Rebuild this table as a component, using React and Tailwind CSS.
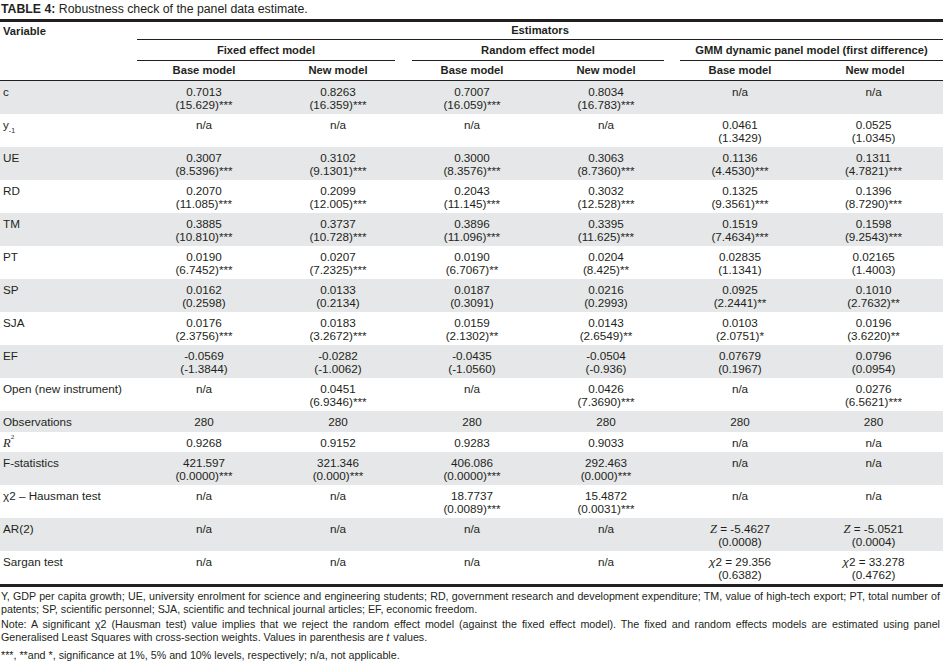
import React from "react";

const NA = ["n/a"];

const ROWS = [
  { v: "c", cells: [["0.7013", "(15.629)***"], ["0.8263", "(16.359)***"], ["0.7007", "(16.059)***"], ["0.8034", "(16.783)***"], NA, NA] },
  { v: "y", cells: [NA, NA, NA, NA, ["0.0461", "(1.3429)"], ["0.0525", "(1.0345)"]] },
  { v: "UE", cells: [["0.3007", "(8.5396)***"], ["0.3102", "(9.1301)***"], ["0.3000", "(8.3576)***"], ["0.3063", "(8.7360)***"], ["0.1136", "(4.4530)***"], ["0.1311", "(4.7821)***"]] },
  { v: "RD", cells: [["0.2070", "(11.085)***"], ["0.2099", "(12.005)***"], ["0.2043", "(11.145)***"], ["0.3032", "(12.528)***"], ["0.1325", "(9.3561)***"], ["0.1396", "(8.7290)***"]] },
  { v: "TM", cells: [["0.3885", "(10.810)***"], ["0.3737", "(10.728)***"], ["0.3896", "(11.096)***"], ["0.3395", "(11.625)***"], ["0.1519", "(7.4634)***"], ["0.1598", "(9.2543)***"]] },
  { v: "PT", cells: [["0.0190", "(6.7452)***"], ["0.0207", "(7.2325)***"], ["0.0190", "(6.7067)**"], ["0.0204", "(8.425)**"], ["0.02835", "(1.1341)"], ["0.02165", "(1.4003)"]] },
  { v: "SP", cells: [["0.0162", "(0.2598)"], ["0.0133", "(0.2134)"], ["0.0187", "(0.3091)"], ["0.0216", "(0.2993)"], ["0.0925", "(2.2441)**"], ["0.1010", "(2.7632)**"]] },
  { v: "SJA", cells: [["0.0176", "(2.3756)***"], ["0.0183", "(3.2672)***"], ["0.0159", "(2.1302)**"], ["0.0143", "(2.6549)**"], ["0.0103", "(2.0751)*"], ["0.0196", "(3.6220)**"]] },
  { v: "EF", cells: [["-0.0569", "(-1.3844)"], ["-0.0282", "(-1.0062)"], ["-0.0435", "(-1.0560)"], ["-0.0504", "(-0.936)"], ["0.07679", "(0.1967)"], ["0.0796", "(0.0954)"]] },
  { v: "Open (new instrument)", cells: [NA, ["0.0451", "(6.9346)***"], NA, ["0.0426", "(7.3690)***"], NA, ["0.0276", "(6.5621)***"]] },
  { v: "Observations", cells: [["280"], ["280"], ["280"], ["280"], ["280"], ["280"]] },
  { v: "R2", cells: [["0.9268"], ["0.9152"], ["0.9283"], ["0.9033"], NA, NA] },
  { v: "F-statistics", cells: [["421.597", "(0.0000)***"], ["321.346", "(0.000)***"], ["406.086", "(0.0000)***"], ["292.463", "(0.000)***"], NA, NA] },
  { v: "χ2 – Hausman test", cells: [NA, NA, ["18.7737", "(0.0089)***"], ["15.4872", "(0.0031)***"], NA, NA] },
  { v: "AR(2)", cells: [NA, NA, NA, NA, ["Z|-5.4627", "(0.0008)"], ["Z|-5.0521", "(0.0004)"]] },
  { v: "Sargan test", cells: [NA, NA, NA, NA, ["X|29.356", "(0.6382)"], ["X|33.278", "(0.4762)"]] },
];

function Label({ v }) {
  if (v === "y")
    return (
      <span>
        y<sub className="text-[7px] align-[-2px]">-1</sub>
      </span>
    );
  if (v === "R2")
    return (
      <span className="font-['Liberation_Serif',serif] italic text-[12.5px]">
        R<sup className="text-[7px] not-italic align-[4px]">2</sup>
      </span>
    );
  return v;
}

function Value({ text }) {
  if (text.startsWith("Z|"))
    return (
      <span>
        <span className="font-['Liberation_Serif',serif] italic text-[12.5px]">Z</span> = {text.slice(2)}
      </span>
    );
  if (text.startsWith("X|"))
    return (
      <span>
        <span className="italic">χ</span>2 = {text.slice(2)}
      </span>
    );
  return text;
}

export default function App() {
  return (
    <div className="w-[946px] h-[663px] bg-white text-[#231f20] font-['Liberation_Sans',Arial,sans-serif] overflow-hidden">
      <div className="h-[19px] flex items-center text-[12.3px] pl-[1px]">
        <span className="font-bold">TABLE 4:</span>&nbsp;Robustness check of the panel data estimate.
      </div>
      <div className="h-[3px] w-[943px] bg-[#231f20]" />

      <table className="table-fixed border-separate border-spacing-0 w-[943px] text-[11.7px]">
        <colgroup>
          <col className="w-[137px]" />
          <col className="w-[134px]" />
          <col className="w-[134px]" />
          <col className="w-[134px]" />
          <col className="w-[134px]" />
          <col className="w-[134px]" />
          <col className="w-[136px]" />
        </colgroup>
        <thead className="text-[11.2px]">
          <tr>
            <th rowSpan={3} className="p-0 pl-[3px] pt-[1px] text-left align-top font-bold border-b border-[#231f20]">
              Variable
            </th>
            <th colSpan={6} className="p-0 h-[18px] font-bold border-b border-[#231f20]">
              Estimators
            </th>
          </tr>
          <tr>
            <th colSpan={2} className="p-0 font-bold">
              <div className="h-[21px] flex items-center justify-center border-b border-[#231f20] mr-[10px]">
                Fixed effect model
              </div>
            </th>
            <th colSpan={2} className="p-0 font-bold">
              <div className="h-[21px] flex items-center justify-center border-b border-[#231f20] ml-[7px] mr-[9px]">
                Random effect model
              </div>
            </th>
            <th colSpan={2} className="p-0 font-bold">
              <div className="h-[21px] flex items-center justify-center border-b border-[#231f20] ml-[7px]">
                GMM dynamic panel model (first difference)
              </div>
            </th>
          </tr>
          <tr>
            {["Base model", "New model", "Base model", "New model", "Base model", "New model"].map((h, i) => (
              <th key={i} className="p-0 h-[20px] font-bold border-b border-[#231f20]">
                {h}
              </th>
            ))}
          </tr>
        </thead>
        <tbody>
          {ROWS.map((r, i) => (
            <tr key={i} className={i % 2 === 0 ? "bg-[#e6e7e8]" : "bg-white"}>
              <td className="pl-[3px] pt-[5px] pb-[3px] leading-[12.5px] align-top text-left">
                <Label v={r.v} />
              </td>
              {r.cells.map((c, j) => (
                <td key={j} className={"pt-[5px] pb-[3px] leading-[12.5px] align-top text-center" + (j === 5 ? " pr-[3px]" : "")}>
                  {c.map((t, k) => (
                    <div key={k}>
                      <Value text={t} />
                    </div>
                  ))}
                </td>
              ))}
            </tr>
          ))}
        </tbody>
      </table>
      <div className="h-[3px] w-[943px] bg-[#231f20]" />

      <div className="w-[940px] pl-[1px] pt-[3px] text-[10.7px] leading-[13px] text-justify">
        <p className="mb-[2px]">
          Y, GDP per capita growth; UE, university enrolment for science and engineering students; RD, government research and development expenditure; TM, value of high-tech export; PT, total number of patents; SP, scientific personnel; SJA, scientific and technical journal articles; EF, economic freedom.
        </p>
        <p className="mb-[5px]">
          Note: A significant χ2 (Hausman test) value implies that we reject the random effect model (against the fixed effect model). The fixed and random effects models are estimated using panel Generalised Least Squares with cross-section weights. Values in parenthesis are <i className="pr-[1px]">t</i> values.
        </p>
        <p>***, **and *, significance at 1%, 5% and 10% levels, respectively; n/a, not applicable.</p>
      </div>
    </div>
  );
}
